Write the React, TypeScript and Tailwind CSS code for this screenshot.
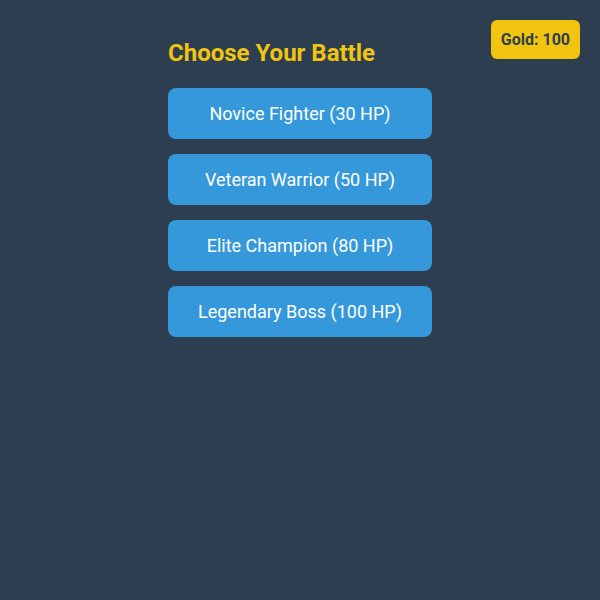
const battles = [
  { name: 'Novice Fighter', hp: 30 },
  { name: 'Veteran Warrior', hp: 50 },
  { name: 'Elite Champion', hp: 80 },
  { name: 'Legendary Boss', hp: 100 },
]

export default function App() {
  return (
    <div className="relative min-h-[600px] bg-[#2c3e50] font-['Roboto',sans-serif]">
      <div className="absolute right-5 top-5 rounded-md bg-[#f1c40f] px-[10px] py-[9px] text-base font-bold leading-[21px] text-[#2c3e50]">
        Gold: 100
      </div>
      <div className="mx-auto flex w-[264px] flex-col pt-[38px]">
        <h2 className="mb-[20px] text-[24px] font-bold leading-[30px] text-[#f1c40f]">Choose Your Battle</h2>
        <div className="flex flex-col gap-[15px]">
          {battles.map((b) => (
            <button
              key={b.name}
              className="h-[51px] w-full rounded-lg bg-[#3498db] text-[18px] text-white"
            >
              {b.name} ({b.hp} HP)
            </button>
          ))}
        </div>
      </div>
    </div>
  )
}
